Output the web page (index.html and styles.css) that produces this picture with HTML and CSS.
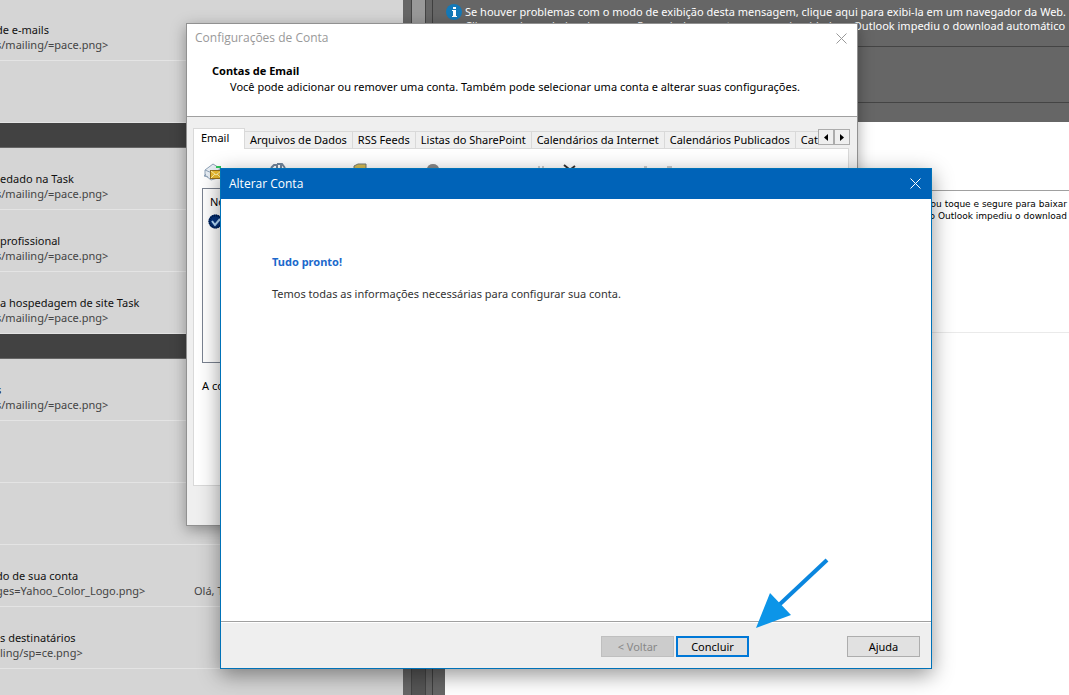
FILE: index.html
```
<!DOCTYPE html>
<html lang="pt-BR">
<head>
<meta charset="utf-8">
<title>Alterar Conta</title>
<link rel="stylesheet" href="styles.css">
</head>
<body>
<div class="desktop">
  <div class="mail-list">
    <div class="row"><strong>de e-mails</strong><span>s/mailing/=pace.png&gt;</span></div>
    <div class="row"></div>
    <div class="group"></div>
    <div class="row"><strong class="whole">edado na Task</strong><span>s/mailing/=pace.png&gt;</span></div>
    <div class="row"><strong class="whole">profissional</strong><span>s/mailing/=pace.png&gt;</span></div>
    <div class="row"><strong class="whole">a hospedagem de site Task</strong><span>s/mailing/=pace.png&gt;</span></div>
    <div class="group"></div>
    <div class="row"><strong>s</strong><span>s/mailing/=pace.png&gt;</span></div>
    <div class="row"></div>
    <div class="row"></div>
    <div class="row"><strong>do de sua conta</strong><span class="split"><span>ges=Yahoo_Color_Logo.png&gt;</span><span>Olá, Tudo bem?</span></span></div>
    <div class="row"><strong class="whole">s destinatários</strong><span class="whole">ling/sp=ce.png&gt;</span></div>
    <div class="row"></div>
  </div>
  <div class="gutter"><div class="track"><div class="thumb"></div></div></div>
  <div class="reader">
    <div class="notice">
      <svg class="info" viewBox="0 0 16 16" aria-hidden="true"><circle cx="8" cy="8" r="8" fill="#1479b8"/><rect x="7" y="3" width="3" height="2" fill="#fff"/><path d="M6 6h4v6h1v1H6v-1h1V7H6z" fill="#fff"/></svg>
      <p>Se houver problemas com o modo de exibição desta mensagem, clique aqui para exibi-la em um navegador da Web.<br>Clique aqui para baixar imagens. Para ajudar a proteger sua privacidade, o Outlook impediu o download automático</p>
    </div>
    <div class="subject"></div>
    <div class="spacer"></div>
    <div class="message"></div>
    <div class="blocked">Clique aqui com o botão direito ou toque e segure para baixar<br>imagens. Para ajudar a proteger sua privacidade, o Outlook impediu o download</div>
  </div>
</div>

<section class="window settings">
  <header class="settings-title"><h2>Configurações de Conta</h2>
    <button class="close" aria-label="Fechar"><svg viewBox="0 0 11 11"><path d="M.5.5l10 10M10.500.5l-10 10"/></svg></button></header>
  <div class="intro"><h3>Contas de Email</h3><p>Você pode adicionar ou remover uma conta. Também pode selecionar uma conta e alterar suas configurações.</p></div>
  <div class="settings-body">
    <div class="tabs">
      <button class="tab active">Email</button>
      <button class="tab">Arquivos de Dados</button>
      <button class="tab">RSS Feeds</button>
      <button class="tab">Listas do SharePoint</button>
      <button class="tab">Calendários da Internet</button>
      <button class="tab">Calendários Publicados</button>
      <button class="tab last">Catálogos</button>
      <div class="scroll">
        <button aria-label="Anterior"><svg viewBox="0 0 4 7"><path d="M4 0v7L0 3.500z"/></svg></button>
        <button aria-label="Próximo"><svg viewBox="0 0 4 7"><path d="M0 0v7l4-3.500z"/></svg></button>
      </div>
    </div>
    <div class="page">
      <svg class="tools" width="640" height="25" aria-hidden="true">
        <path d="M3 10l8-6 8 5v8l-10 3-6-5z" fill="#e8eef4" stroke="#8fa3b8"/><path d="M3 10l7 3 9-4M4 14l-2 2 4 1" fill="none" stroke="#8fa3b8"/>
        <rect x="8.500" y="10.500" width="11" height="8" fill="#edbd32" stroke="#98701a"/><path d="M9 11l5 4 5-4M9 18l4-4M19 18l-4-4" stroke="#fff2a8" fill="none"/><path d="M14 7h5" stroke="#2fc45a" stroke-width="2"/>
        <path d="M69 8l3-3h3v4M75 4h5l3 4M79 5v4" fill="none" stroke="#71859b" stroke-width="2"/>
        <path d="M152 9v-3l4-2h8v5z" fill="#d3bb55" stroke="#777b70"/>
        <ellipse cx="231" cy="9" rx="6" ry="5" fill="#888"/>
        <path d="M336 7h2M340 7h2M442 7h3M465 7h5" stroke="#999"/><path d="M362 5l5 4M373 6l-4 3" stroke="#333" stroke-width="2"/>
      </svg>
      <div class="accounts">
        <div>Nome</div>
        <svg viewBox="0 0 15 15" aria-hidden="true"><circle cx="7.500" cy="7.500" r="7" fill="#06357f"/><circle cx="7.500" cy="7.500" r="6" fill="none" stroke="#001b47" stroke-width="2" stroke-dasharray="1 1"/><path d="M4 7l3 4 5-6" fill="none" stroke="#b9e0ff" stroke-width="2"/></svg>
      </div>
      <p>A conta selecionada</p>
    </div>
  </div>
</section>

<section class="window wizard" role="dialog" aria-labelledby="wizard-title">
  <header class="wizard-title"><h1 id="wizard-title">Alterar Conta</h1>
    <button class="close" aria-label="Fechar"><svg viewBox="0 0 11 11"><path d="M.5.5l10 10M10.500.5l-10 10"/></svg></button></header>
  <main class="wizard-body"><h2>Tudo pronto!</h2><p>Temos todas as informações necessárias para configurar sua conta.</p></main>
  <footer class="wizard-footer">
    <button class="push" disabled>&lt; Voltar</button>
    <button class="push primary">Concluir</button>
    <button class="push help">Ajuda</button>
  </footer>
</section>
<svg class="arrow" viewBox="0 0 76 72" aria-hidden="true"><path d="M72 3L24 48" stroke="#0a86de" stroke-width="4"/><path d="M1 71L15 36 36 58z" fill="#0c95e8"/></svg>
</body>
</html>
```
FILE: styles.css
```
* { box-sizing: border-box; }
body, h1, h2, h3, p { margin: 0; }
body {
  position: relative;
  height: 100vh;
  overflow: hidden;
  font: 11px/15px "Noto Sans", "Open Sans", sans-serif;
  color: #000;
}
button { font: inherit; color: inherit; padding: 0; border: 0; background: none; }

.desktop { display: grid; grid-template-columns: 403px 42px 1fr; height: 100%; background: #fff; }
.mail-list { background: #d5d5d5; overflow: hidden; min-height: 0; white-space: nowrap; }
.row { height: 62px; padding: 23px 0 0; border-bottom: 1px solid #e4e4e4; color: #444; }
.row:first-child { height: 61px; padding-top: 22px; }
.row > * { display: block; margin-left: -4px; }
.row > .whole { margin-left: 0; }
.row strong { font-weight: 400; color: #111; }
.row .split { display: grid; grid-template-columns: 198px 1fr; }
.group { height: 25px; background: #424242; border-bottom: 1px solid #666; }

.gutter { display: flex; padding: 0 12px 0 8px; background: #666; box-shadow: inset -12px 0 #666, inset -13px 0 #3f3f3f; }
.track { flex: 1; margin-right: 7px; background: #555; border-left: 1px solid #444; border-right: 1px solid #444; }
.thumb { height: 122px; background: #999; }

.reader { min-width: 0; overflow: hidden; white-space: nowrap; }
.notice { display: flex; gap: 3px; height: 47px; padding: 4px 0 0 1px; background: #666; border-bottom: 1px solid #444; color: #fff; }
.notice p { line-height: 14px; margin-top: 1px; }
.info { width: 16px; height: 16px; flex: none; }
.subject { height: 56px; background: #666; border-bottom: 1px solid #444; }
.spacer { height: 19px; background: #666; }
.message { height: 69px; border-bottom: 1px solid #a0a0a0; }
.blocked { height: 142px; padding: 7px 2px 0 0; border-bottom: 1px solid #eaeaea; text-align: right; font: 9px/12px "DejaVu Sans", sans-serif; }

.window { position: absolute; display: flex; flex-direction: column; }
.settings { left: 186px; top: 23px; width: 672px; height: 503px; border: 1px solid #919191; background: #efefef; box-shadow: 0 4px 14px rgba(0,0,0,.35); white-space: nowrap; }
.settings-title, .wizard-title { display: flex; justify-content: space-between; align-items: center; height: 30px; padding: 0 10px 1px 8px; }
.settings-title { height: 29px; background: #fff; color: #999; }
.settings-title h2, .wizard-title h1 { font: 400 12px/16px "Open Sans", sans-serif; }
.close { width: 11px; height: 11px; display: flex; }
.close svg { width: 11px; height: 11px; stroke: currentColor; fill: none; }
.intro { height: 64px; padding: 10px 25px; background: #fff; border-bottom: 1px solid #a0a0a0; }
.intro h3 { font-size: 11px; line-height: 16px; }
.intro p { padding-left: 18px; line-height: 16px; }
.settings-body { flex: 1; display: flex; flex-direction: column; padding: 11px 8px 39px 6px; }
.tabs { position: relative; display: flex; align-items: flex-end; height: 20px; margin-right: -1px; }
.tab { flex: none; height: 17px; padding: 0 5px; line-height: 16px; border: solid #d9d9d9; border-width: 1px 1px 0 0; }
.tab.active { height: 21px; width: 52px; margin-bottom: -1px; padding: 0 8px 3px 7px; text-align: left; background: #fff; border-left-width: 1px; z-index: 1; }
.tab.last { width: 24px; overflow: hidden; text-align: left; border-right: 0; }
.scroll { position: absolute; right: 0; top: 1px; display: flex; background: #efefef; }
.scroll button { display: grid; place-items: center; width: 16px; height: 16px; border: 1px solid #acacac; }
.scroll svg { width: 4px; height: 7px; }
.page { flex: 1; border: 1px solid #d9d9d9; background: #fff; padding: 11px 8px; }
.tools { display: block; }
.accounts { height: 175px; margin-top: 3px; border: 1px solid #7a8290; padding: 5px 7px; }
.accounts svg { display: block; width: 15px; height: 15px; margin: 5px 0 0 -2px; }
.page p { margin-top: 15px; }

.wizard { left: 220px; top: 168px; width: 712px; height: 501px; border: 1px solid #0072b8; background: #fff; box-shadow: 0 6px 20px rgba(0,0,0,.42); }
.wizard-title { background: #0063b8; color: #fff; }
.wizard-body { flex: 1; padding: 55px 51px; color: #333; }
.wizard-body h2 { font-size: 11px; line-height: 16px; color: #1c69cc; margin-bottom: 16px; }
.wizard-body p { line-height: 16px; }
.wizard-footer { display: flex; gap: 2px; height: 47px; padding: 14px 11px 0 380px; background: #efefef; border-top: 1px solid #a0a0a0; box-shadow: inset 0 1px #fff; }
.push { width: 73px; height: 21px; border: 1px solid #adadad; background: #e1e1e1; }
.push:disabled { color: #888; background: #ccc; border-color: #bfbfbf; }
.primary { border: 2px solid #0078d7; }
.help { margin-left: auto; }
.arrow { position: absolute; left: 755px; top: 557px; width: 76px; height: 72px; }
```
